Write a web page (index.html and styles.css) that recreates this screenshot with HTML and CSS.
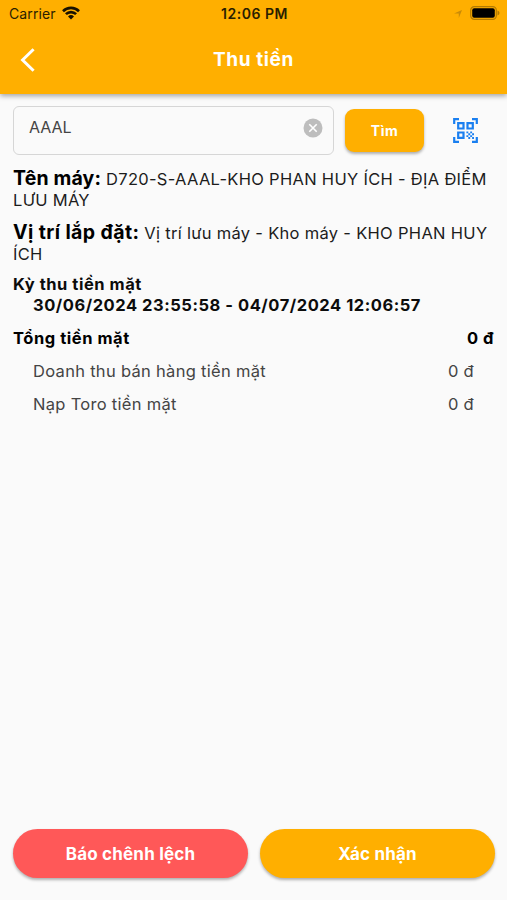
FILE: index.html
```html
<!DOCTYPE html>
<html lang="vi">
<head>
  <meta charset="UTF-8">
  <meta name="viewport" content="width=device-width, initial-scale=1.0">
  <title>Thu tiền</title>
  <link rel="stylesheet" href="styles.css">
</head>
<body>
  <header class="header">
    <div class="status-bar">
      <div class="carrier">
        <span>Carrier</span>
        <svg class="wifi" viewBox="0 0 18 14">
          <path d="M1 5.2a11.4 11.4 0 0 1 16 0" />
          <path d="M3.9 8.2a7.2 7.2 0 0 1 10.2 0" />
          <path class="dot" d="M9 13.6l-3-3.1a4.3 4.3 0 0 1 6 0z" />
        </svg>
      </div>
      <span class="time">12:06 PM</span>
      <div class="indicators">
        <svg class="location" viewBox="0 0 8 8"><path d="M8 0L4.8 8V3.6H0z" /></svg>
        <svg class="battery" viewBox="0 0 30 14">
          <rect class="shell" x="0.7" y="0.7" width="25.6" height="12.6" rx="3.6" />
          <rect x="2.2" y="2.2" width="22.6" height="9.6" rx="2" />
          <path class="cap" d="M27.5 4.5q2 .8 2 2.5t-2 2.5z" />
        </svg>
      </div>
    </div>
    <div class="title-bar">
      <svg class="back" viewBox="0 0 16 26"><path d="M13.6 2.2L2.6 13l11 10.8" /></svg>
      <h1>Thu tiền</h1>
    </div>
  </header>

  <main class="content">
    <div class="search-bar">
      <div class="search-field">
        <span>AAAL</span>
        <svg class="clear" viewBox="0 0 20 20">
          <circle cx="10" cy="10" r="9.5" />
          <path d="M6.3 6.3l7.4 7.4M13.7 6.3l-7.4 7.4" />
        </svg>
      </div>
      <button class="search-btn">Tìm</button>
      <svg class="qr" viewBox="0 0 25 25">
        <path d="M1.2 6V1.2H6M19 1.2h4.8V6M23.8 19v4.8H19M6 23.8H1.2V19" />
        <path d="M5.2 5.2h5.3v5.3H5.2zM14.5 5.2h5.3v5.3h-5.3zM5.2 14.5h5.3v5.3H5.2z" />
        <path class="bits" d="M13.4 13.4h1.9v1.9h-1.9zM17.2 13.4h1.9v1.9h-1.9zM15.3 15.3h1.9v1.9h-1.9zM19.1 15.3H21v1.9h-1.9zM13.4 17.2h1.9v1.9h-1.9zM17.2 17.2h1.9v1.9h-1.9zM15.3 19.1h1.9V21h-1.9zM19.1 19.1H21V21h-1.9z" />
      </svg>
    </div>

    <p class="info info-name"><strong>Tên máy:</strong> D720-S-AAAL-KHO PHAN HUY ÍCH - ĐỊA ĐIỂM LƯU MÁY</p>
    <p class="info info-place"><strong>Vị trí lắp đặt:</strong> Vị trí lưu máy - Kho máy - KHO PHAN HUY ÍCH</p>

    <div class="period">
      <div>Kỳ thu tiền mặt</div>
      <div class="range">30/06/2024 23:55:58 - 04/07/2024 12:06:57</div>
    </div>

    <div class="row total">
      <span>Tổng tiền mặt</span>
      <span>0 đ</span>
    </div>
    <div class="row detail">
      <span>Doanh thu bán hàng tiền mặt</span>
      <span>0 đ</span>
    </div>
    <div class="row detail">
      <span>Nạp Toro tiền mặt</span>
      <span>0 đ</span>
    </div>
  </main>

  <footer class="actions">
    <button class="report-btn">Báo chênh lệch</button>
    <button class="confirm-btn">Xác nhận</button>
  </footer>
</body>
</html>
```

FILE: styles.css
```css
* {
  box-sizing: border-box;
}

body {
  display: flex;
  flex-direction: column;
  height: 100vh;
  margin: 0;
  background-color: #fafafa;
  color: #1c1c1c;
  font-family: Inter, "Noto Sans", sans-serif;
  font-size: 16.5px;
  line-height: 21px;
}

svg {
  display: block;
  fill: none;
}

.header {
  height: 94px;
  background-color: #ffaf00;
  box-shadow: 0 2px 5px rgba(0,0,0,0.35);
}

/* Status bar */
.status-bar {
  display: grid;
  grid-template-columns: 1fr auto 1fr;
  align-items: center;
  height: 27px;
  padding: 0 7px 0 9px;
  color: #2a1e00;
  font-size: 14px;
}

.carrier, .indicators {
  display: flex;
  align-items: center;
}

.carrier {
  gap: 6px;
  letter-spacing: 0.1px;
}

.wifi {
  width: 18px;
  height: 14px;
  margin-top: -2px;
  stroke: #1a1200;
  stroke-width: 2.6;
}

.wifi .dot {
  fill: #1a1200;
  stroke: none;
}

.time {
  font-weight: 600;
  letter-spacing: 0.5px;
}

.indicators {
  justify-content: flex-end;
  gap: 8px;
}

.location {
  width: 8px;
  height: 8px;
  fill: #c98b08;
}

.battery {
  width: 30px;
  height: 14px;
  margin-top: -1px;
  fill: #000;
}

.battery .shell {
  fill: none;
  stroke: #b37b00;
  stroke-width: 1.2;
}

.battery .cap {
  fill: #b37b00;
}

.title-bar {
  display: grid;
  grid-template-columns: 1fr auto 1fr;
  align-items: center;
  height: 65px;
  padding: 0 20px;
}

.back {
  width: 16px;
  height: 26px;
  stroke: #fff;
  stroke-width: 3;
}

h1 {
  margin: 0;
  color: #fff;
  font-size: 19px;
  font-weight: 700;
  letter-spacing: 0.6px;
}

/* Search */
.content {
  flex: 1;
  padding: 12px 13px 0;
}

.search-bar {
  display: flex;
  align-items: center;
  height: 49px;
  margin-bottom: 13px;
}

.search-field {
  display: flex;
  justify-content: space-between;
  width: 321px;
  height: 49px;
  padding: 10px 10px 0 15px;
  border: 1.5px solid #d6d6d6;
  border-radius: 6px;
  color: #444;
  font-size: 16px;
}

.clear {
  width: 20px;
  height: 20px;
  margin-top: 1px;
  fill: #bdbdbd;
  stroke: #fff;
  stroke-width: 1.6;
}

.clear circle {
  stroke: none;
}

button {
  padding: 0;
  border: none;
  color: #fff;
  font-family: inherit;
  font-weight: 700;
  letter-spacing: 0.2px;
  box-shadow: 0 2px 3px rgba(0,0,0,0.3);
}

.search-btn {
  width: 79px;
  height: 43px;
  margin-left: 11px;
  border-radius: 9px;
  background-color: #ffaf00;
  font-size: 14px;
  letter-spacing: 0.5px;
}

.qr {
  width: 25px;
  height: 25px;
  margin-left: 29px;
  stroke: #1a7ff0;
  stroke-width: 2.2;
}

.qr .bits {
  fill: #1a7ff0;
  stroke: none;
}

/* Machine info */
.info {
  margin: 0 0 11px;
  letter-spacing: 0.3px;
}

.info strong {
  color: #000;
  font-size: 19.5px;
  letter-spacing: 0.15px;
}

.info-place strong {
  letter-spacing: 0.4px;
}

.info-place {
  margin-bottom: 9px;
}

.period {
  margin-bottom: 12px;
  color: #0c0c0c;
  font-weight: 700;
  letter-spacing: 0.54px;
}

.range {
  padding-left: 20px;
}

.row {
  display: flex;
  justify-content: space-between;
  margin-bottom: 12px;
}

.total {
  color: #000;
  font-weight: 700;
  letter-spacing: 0.55px;
}

.detail {
  padding: 0 20px;
  color: #444;
  letter-spacing: 0.3px;
}

/* Bottom buttons */
.actions {
  display: flex;
  gap: 12px;
  padding: 0 12px 22px 13px;
}

.actions button {
  flex: 1;
  height: 49px;
  border-radius: 25px;
  font-size: 17px;
}

.report-btn {
  background-color: #ff5858;
}

.confirm-btn {
  background-color: #ffaf00;
}
```
